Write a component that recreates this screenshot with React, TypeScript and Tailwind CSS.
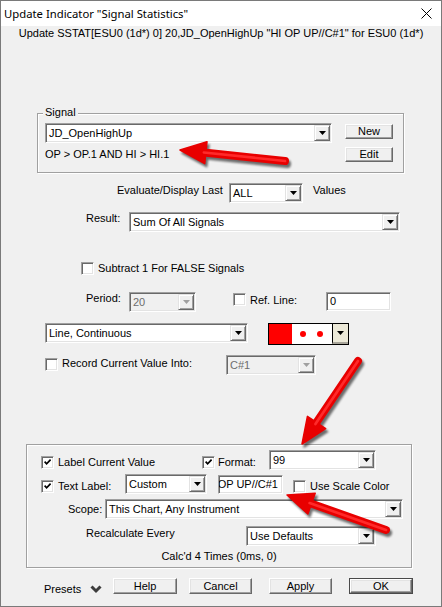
import React from "react";

const sunken =
  "border border-t-[#a0a0a0] border-l-[#a0a0a0] border-b-white border-r-white shadow-[inset_1px_1px_0_#696969,inset_-1px_-1px_0_#e3e3e3]";

function Tri({ color = "#000" }: { color?: string }) {
  return (
    <svg width="7" height="4" viewBox="0 0 7 4">
      <path d="M0 0h7L3.5 4z" fill={color} />
    </svg>
  );
}

function DropBtn({ disabled }: { disabled?: boolean }) {
  return (
    <div className="h-full w-[16px] shrink-0 bg-[#f0f0f0] border border-t-[#e3e3e3] border-l-[#e3e3e3] border-b-[#696969] border-r-[#696969] shadow-[inset_1px_1px_0_#fff,inset_-1px_-1px_0_#a0a0a0] flex items-center justify-center">
      <Tri color={disabled ? "#a0a0a0" : "#000"} />
    </div>
  );
}

function Combo({ className, text, disabled }: { className: string; text: string; disabled?: boolean }) {
  return (
    <div
      className={`${className} ${sunken} p-[1px] flex shrink-0 ${
        disabled ? "bg-[#f0f0f0] text-[#6d6d6d]" : "bg-white"
      }`}
    >
      <div className="flex-1 flex items-center pl-[2px] whitespace-nowrap overflow-hidden">{text}</div>
      <DropBtn disabled={disabled} />
    </div>
  );
}

function TextBox({ className, children }: { className: string; children: React.ReactNode }) {
  return (
    <div className={`${className} ${sunken} bg-white flex items-center shrink-0 overflow-hidden whitespace-nowrap`}>
      {children}
    </div>
  );
}

function Check({ checked, className = "" }: { checked?: boolean; className?: string }) {
  return (
    <div className={`${className} w-[13px] h-[13px] shrink-0 bg-white ${sunken} flex items-center justify-center`}>
      {checked && (
        <svg width="7" height="7" viewBox="0 0 7 7">
          <path d="M0.6 2.6 L2.6 4.8 L6.6 0.6" stroke="#000" strokeWidth="1.7" fill="none" />
        </svg>
      )}
    </div>
  );
}

function Btn({ className, children, def }: { className: string; children: React.ReactNode; def?: boolean }) {
  return (
    <div className={`${className} shrink-0 ${def ? "border border-[#4a4a4a]" : ""}`}>
      <div className="h-full w-full bg-[#f0f0f0] border border-t-white border-l-white border-b-[#696969] border-r-[#696969] shadow-[inset_-1px_-1px_0_#a0a0a0,inset_1px_1px_0_#e3e3e3] flex items-center justify-center leading-[13px]">
        {children}
      </div>
    </div>
  );
}

function ColorBox() {
  return (
    <div className="ml-[20px] w-[81px] h-[22px] border border-black flex shrink-0">
      <div className="w-[23px] h-full bg-[#ff0000]" />
      <div className="flex-1 h-full bg-white flex items-center">
        <div className="ml-[8px] w-[6px] h-[6px] rounded-full bg-[#ff0000]" />
        <div className="ml-[11px] w-[6px] h-[6px] rounded-full bg-[#ff0000]" />
      </div>
      <div className="w-[16px] h-full bg-[#ece9d8] border-l border-black border-b-2 border-b-[#a8a59a] flex items-center justify-center">
        <Tri />
      </div>
    </div>
  );
}

type Pt = [number, number];

function Arrow({ from, to, w = 8, hl = 26, hw = 22 }: { from: Pt; to: Pt; w?: number; hl?: number; hw?: number }) {
  const [x1, y1] = from;
  const [x2, y2] = to;
  const len = Math.hypot(x2 - x1, y2 - y1);
  const ux = (x2 - x1) / len;
  const uy = (y2 - y1) / len;
  const px = -uy;
  const py = ux;
  const bx = x2 - ux * hl;
  const by = y2 - uy * hl;
  const head = [
    [bx + (px * hw) / 2, by + (py * hw) / 2],
    [x2, y2],
    [bx - (px * hw) / 2, by - (py * hw) / 2],
  ]
    .map((p) => p.join(","))
    .join(" ");
  const sx = bx + ux * 2;
  const sy = by + uy * 2;
  const shape = (fill: string, dx: number, dy: number, extra?: object) => (
    <g transform={`translate(${dx} ${dy})`} {...extra}>
      <line x1={x1} y1={y1} x2={sx} y2={sy} stroke={fill} strokeWidth={w} strokeLinecap="round" />
      <polygon points={head} fill={fill} stroke={fill} strokeWidth="1.5" strokeLinejoin="round" />
    </g>
  );
  return (
    <g>
      {shape("#000", 2, 3, { opacity: 0.55, filter: "url(#blur)" })}
      {shape("#e80000", 0, 0)}
      <line x1={x1} y1={y1} x2={sx} y2={sy} stroke="#ff2a2a" strokeWidth={w / 3} strokeLinecap="round" />
    </g>
  );
}

export default function App() {
  return (
    <div className="relative w-[442px] h-[607px] overflow-hidden border border-[#7a7a7a] bg-[#f0f0f0] font-['Liberation_Sans',Arial,sans-serif] text-[11px] text-black flex flex-col">
      {/* Title bar */}
      <div className="h-[25px] bg-white flex items-center justify-between pl-[3px] pr-[9px] shrink-0">
        <span className="font-['Noto_Sans',sans-serif] text-[11.3px] leading-[16px]">Update Indicator "Signal Statistics"</span>
        <svg width="11" height="11" viewBox="0 0 11 11">
          <path d="M0.5 0.5 L10.5 10.5 M10.5 0.5 L0.5 10.5" stroke="#000" strokeWidth="1" />
        </svg>
      </div>

      <div className="h-[15px] leading-[15px] text-center whitespace-nowrap shrink-0">
        Update SSTAT[ESU0 (1d*) 0] 20,JD_OpenHighUp "HI OP UP//C#1" for ESU0 (1d*)
      </div>

      {/* Signal group */}
      <div className="relative mt-[72px] ml-[36px] w-[367px] h-[60px] border border-[#a0a0a0] shadow-[inset_1px_1px_0_#fff,1px_1px_0_#fff] flex shrink-0">
        <span className="absolute left-[5px] top-[-8px] px-[2px] bg-[#f0f0f0] leading-[13px]">Signal</span>
        <div className="ml-[7px] mt-[9px] flex flex-col">
          <Combo className="w-[287px] h-[20px]" text="JD_OpenHighUp" />
          <div className="mt-[4px] leading-[14px]">OP &gt; OP.1 AND HI &gt; HI.1</div>
        </div>
        <div className="ml-[13px] mt-[10px] flex flex-col">
          <Btn className="w-[48px] h-[15px]">New</Btn>
          <Btn className="mt-[8px] w-[48px] h-[15px]">Edit</Btn>
        </div>
      </div>

      {/* Evaluate */}
      <div className="mt-[10px] ml-[116px] flex items-start shrink-0">
        <span className="w-[112px] leading-[14px]">Evaluate/Display Last</span>
        <Combo className="w-[74px] h-[20px]" text="ALL" />
        <span className="ml-[10px] leading-[14px]">Values</span>
      </div>

      {/* Result */}
      <div className="mt-[9px] ml-[85px] flex items-start shrink-0">
        <span className="w-[43px] leading-[13px]">Result:</span>
        <Combo className="w-[271px] h-[20px]" text="Sum Of All Signals" />
      </div>

      {/* Subtract */}
      <div className="mt-[30px] ml-[80px] flex items-start shrink-0">
        <Check />
        <span className="ml-[4px] leading-[13px]">Subtract 1 For FALSE Signals</span>
      </div>

      {/* Period */}
      <div className="mt-[17px] ml-[85px] flex items-start shrink-0">
        <span className="w-[43px] leading-[13px]">Period:</span>
        <Combo className="w-[67px] h-[20px]" text="20" disabled />
        <Check className="ml-[37px] mt-[1px]" />
        <span className="ml-[4px] mt-[1px] w-[76px] leading-[14px]">Ref. Line:</span>
        <TextBox className="w-[65px] h-[19px] pl-[3px]">0</TextBox>
      </div>

      {/* Line style */}
      <div className="mt-[11px] ml-[44px] flex items-start shrink-0">
        <Combo className="w-[203px] h-[20px]" text="Line, Continuous" />
        <ColorBox />
      </div>

      {/* Record */}
      <div className="mt-[10px] ml-[44px] flex items-start shrink-0">
        <Check className="mt-[3px]" />
        <span className="ml-[4px] mt-[2px] w-[164px] leading-[13px]">Record Current Value Into:</span>
        <Combo className="w-[90px] h-[20px]" text="C#1" disabled />
      </div>

      {/* Label group */}
      <div className="mt-[69px] ml-[25px] w-[386px] h-[124px] border border-[#a0a0a0] shadow-[inset_1px_1px_0_#fff,1px_1px_0_#fff] flex flex-col shrink-0">
        <div className="mt-[5px] ml-[14px] flex items-start">
          <Check checked className="mt-[6px]" />
          <span className="ml-[4px] mt-[6px] w-[144px] leading-[13px]">Label Current Value</span>
          <Check checked className="mt-[6px]" />
          <span className="ml-[3px] mt-[6px] w-[51px] leading-[13px]">Format:</span>
          <Combo className="w-[107px] h-[20px]" text="99" />
        </div>

        <div className="mt-[4px] ml-[14px] flex items-start">
          <Check checked className="mt-[6px]" />
          <span className="ml-[4px] mt-[6px] w-[67px] leading-[13px]">Text Label:</span>
          <Combo className="w-[82px] h-[20px]" text="Custom" />
          <TextBox className="ml-[11px] mt-[1px] w-[65px] h-[19px] justify-end pr-[4px]">HI OP UP//C#1</TextBox>
          <Check className="ml-[10px] mt-[6px]" />
          <span className="ml-[4px] mt-[6px] leading-[13px]">Use Scale Color</span>
        </div>

        <div className="mt-[5px] ml-[41px] flex items-center">
          <span className="w-[37px] leading-[13px]">Scope:</span>
          <Combo className="w-[298px] h-[20px]" text="This Chart, Any Instrument" />
        </div>

        <div className="mt-[7px] ml-[59px] flex items-start">
          <span className="mt-[1px] w-[160px] leading-[13px]">Recalculate Every</span>
          <Combo className="w-[130px] h-[20px]" text="Use Defaults" />
        </div>

        <div className="mt-[4px] leading-[13px] text-center">Calc'd 4 Times (0ms, 0)</div>
      </div>

      {/* Bottom buttons */}
      <div className="mt-[10px] ml-[43px] flex items-start shrink-0">
        <span className="mt-[4px] w-[46px] leading-[14px]">Presets</span>
        <svg className="mt-[7px]" width="12" height="9" viewBox="0 0 12 9">
          <path d="M1.5 1.5 L6 6 L10.5 1.5" stroke="#3c3c3c" strokeWidth="3" fill="none" />
        </svg>
        <Btn className="ml-[11px] w-[64px] h-[16px]">Help</Btn>
        <Btn className="ml-[12px] w-[63px] h-[16px]">Cancel</Btn>
        <Btn className="ml-[17px] w-[63px] h-[16px]">Apply</Btn>
        <Btn className="ml-[17px] w-[64px] h-[16px]" def>
          OK
        </Btn>
      </div>

      {/* Annotation arrows */}
      <svg className="absolute left-[-1px] top-[-1px] pointer-events-none" width="442" height="607" viewBox="0 0 442 607">
        <defs>
          <filter id="blur" x="-20%" y="-20%" width="140%" height="140%">
            <feGaussianBlur stdDeviation="1.2" />
          </filter>
        </defs>
        <Arrow from={[285, 161]} to={[180, 150]} />
        <Arrow from={[358, 361]} to={[302, 444]} />
        <Arrow from={[386, 530]} to={[287, 495]} />
      </svg>
    </div>
  );
}
